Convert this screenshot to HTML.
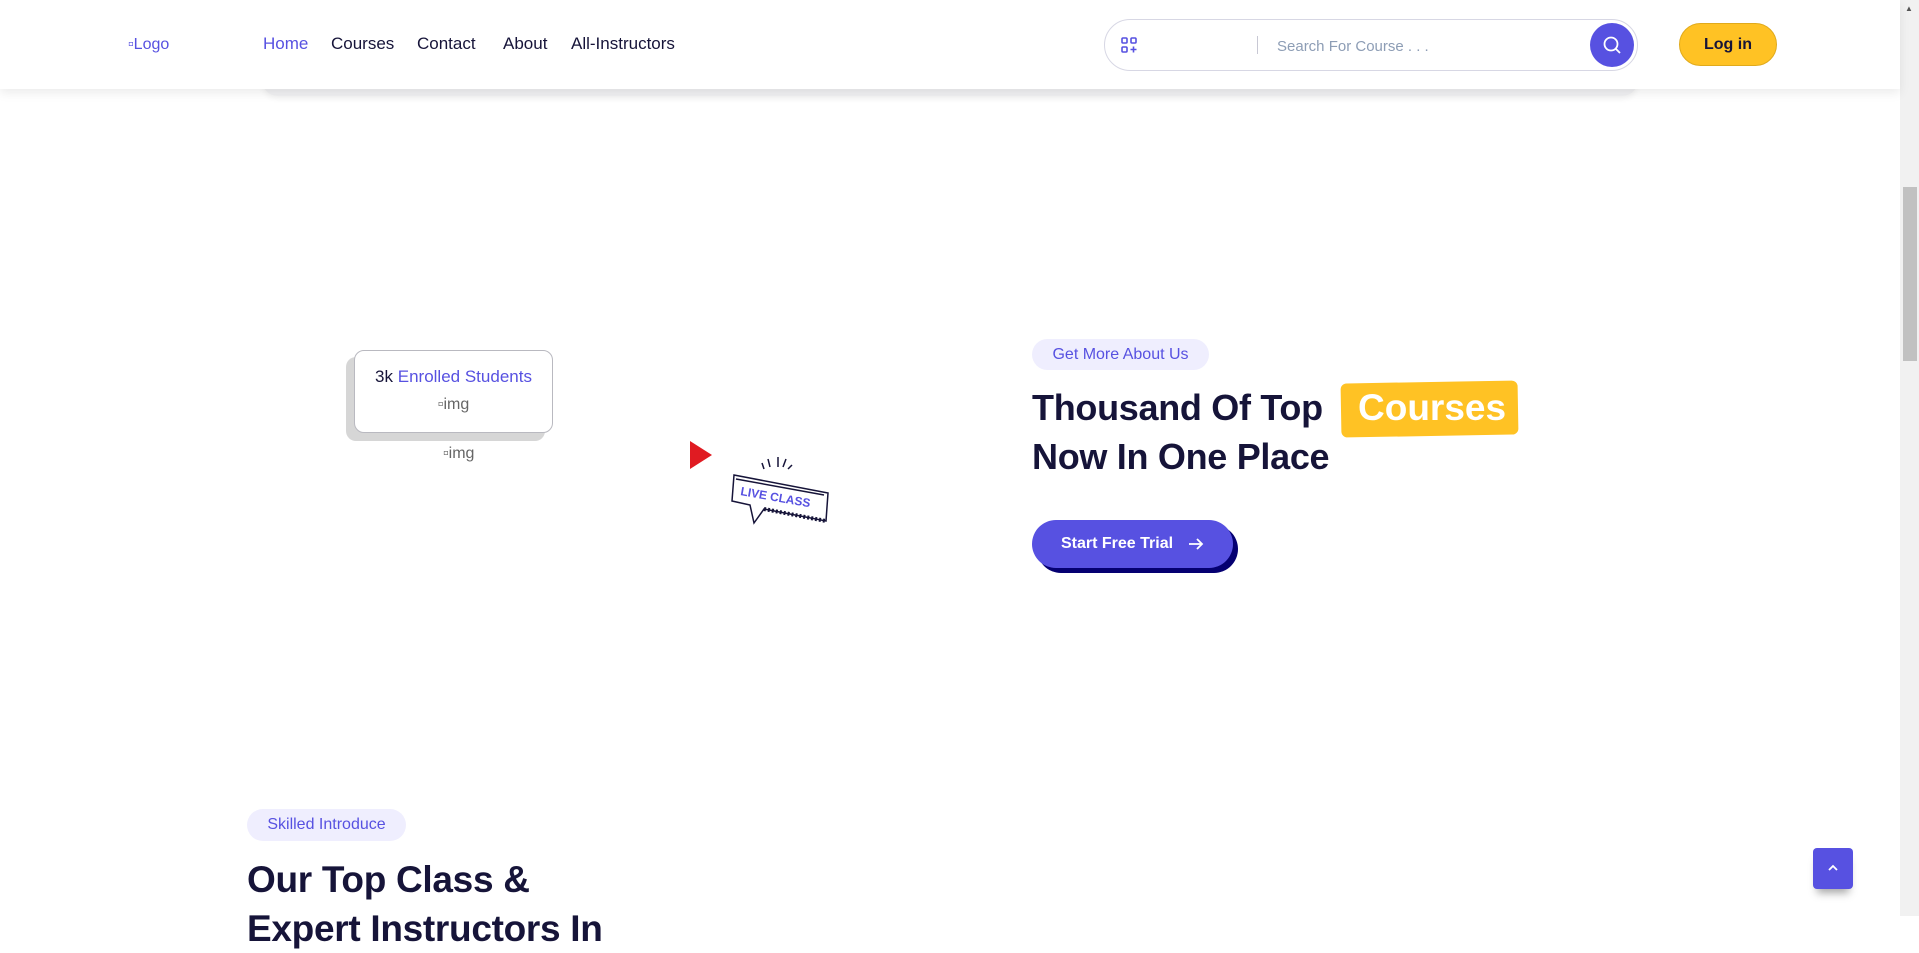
<!DOCTYPE html>
<html><head><meta charset="utf-8"><style>
*{margin:0;padding:0;box-sizing:border-box}
html,body{width:1919px;height:916px;overflow:hidden;background:#fff;font-family:"Liberation Sans",sans-serif;color:#161439}
.abs{position:absolute}
header{position:absolute;left:0;top:0;width:1900px;height:89px;background:#fff;box-shadow:0 4px 10px rgba(0,0,0,.08);z-index:2}
.band{position:absolute;left:262px;top:80px;width:1376px;height:16px;background:#f0f0f2;border-radius:0 0 20px 20px;box-shadow:0 3px 6px rgba(0,0,0,.05)}
.nav a{position:absolute;top:34px;font-size:17px;color:#161439;text-decoration:none}
.sb{position:absolute;right:0;top:0;width:19px;height:916px;background:#f1f1f1}
.thumb{position:absolute;right:2px;top:187px;width:14px;height:174px;background:#c1c1c1}
.badge{position:absolute;background:#efeefe;color:#5751e1;border-radius:16px;font-size:16px;text-align:center}
h1{position:absolute;font-size:36px;font-weight:bold;line-height:49px;color:#161439;letter-spacing:-0.3px}
</style></head><body>
<div class="band"></div>
<header>
 <div class="abs" style="left:128px;top:36px;font-size:16px;color:#5751e1">▫Logo</div>
 <div class="nav">
  <a style="left:263px;color:#5751e1">Home</a>
  <a style="left:331px">Courses</a>
  <a style="left:417px">Contact</a>
  <a style="left:503px">About</a>
  <a style="left:571px">All-Instructors</a>
 </div>
 <div class="abs" style="left:1104px;top:19px;width:534px;height:52px;border:1px solid #d7d7e4;border-radius:26px"></div>
 <svg class="abs" style="left:1121px;top:37px" width="16" height="16" viewBox="0 0 16 16" fill="none" stroke="#5751e1" stroke-width="1.6"><rect x="1" y="1" width="5" height="5" rx="1"/><rect x="10" y="1" width="5" height="5" rx="1"/><rect x="1" y="10" width="5" height="5" rx="1"/><path d="M12.5 9.5v6M9.5 12.5h6"/></svg>
 <div class="abs" style="left:1257px;top:36px;width:1px;height:18px;background:#c8c8d4"></div>
 <div class="abs" style="left:1277px;top:38px;font-size:15px;color:#8d9db5">Search For Course . . .</div>
 <div class="abs" style="left:1590px;top:23px;width:44px;height:44px;border-radius:50%;background:#5751e1"></div>
 <svg class="abs" style="left:1602px;top:35px" width="20" height="20" viewBox="0 0 20 20" fill="none" stroke="#fff" stroke-width="1.8"><circle cx="9" cy="9" r="6.5"/><path d="M14 14l4 4"/></svg>
 <div class="abs" style="left:1679px;top:23px;width:98px;height:43px;border-radius:22px;background:#ffc224;border:1px solid #e0aa1c;font-size:16px;font-weight:bold;text-align:center;line-height:41px;color:#161439">Log in</div>
</header>
<div class="sb"><div class="abs" style="left:5px;top:4px;font-size:8px;color:#555">▲</div><div class="thumb"></div></div>

<div class="abs" style="left:346px;top:357px;width:199px;height:84px;background:#d6d6d6;border-radius:10px"></div>
<div class="abs" style="left:354px;top:350px;width:199px;height:83px;background:#fff;border:1px solid #b9b9c0;border-radius:10px;text-align:center">
 <div style="margin-top:16px;font-size:17px"><span style="color:#161439">3k</span> <span style="color:#5751e1">Enrolled Students</span></div>
 <div style="margin-top:9px;font-size:16px;color:#666">▫img</div>
</div>
<div class="abs" style="left:443px;top:445px;font-size:16px;color:#666">▫img</div>
<svg class="abs" style="left:690px;top:441px" width="22" height="28"><path d="M0 0L22 14L0 28Z" fill="#e01b22"/></svg>
<svg class="abs" style="left:726px;top:455px" width="106" height="80" viewBox="0 0 106 80" fill="none" stroke="#161439" stroke-width="1.5">
 <path d="M42 4l2 8M52 2v10M60 4l-3 8M36 8l2 6M66 10l-4 4"/>
 <path d="M8 20l94 18-2 28-62-12-10 14-4-18-18-4z" fill="#fff"/>
 <path d="M10 24l88 16"/><path d="M38 54l62 12" stroke-width="4" stroke-dasharray="2 2"/>
 <text x="14" y="40" transform="rotate(10 14 40)" font-family="Liberation Sans" font-weight="bold" font-size="12" fill="#5751e1" stroke="none">LIVE CLASS</text>
</svg>

<div class="badge" style="left:1032px;top:339px;width:177px;height:31px;line-height:31px">Get More About Us</div>
<h1 style="left:1032px;top:383px">Thousand Of Top</h1>
<div class="abs" style="left:1341px;top:382px;width:177px;height:54px;background:#ffc224;border-radius:6px;transform:rotate(-1deg)"></div>
<div class="abs" style="left:1358px;top:387px;font-size:37px;font-weight:bold;color:#fff">Courses</div>
<h1 style="left:1032px;top:432px">Now In One Place</h1>
<div class="abs" style="left:1037px;top:525px;width:201px;height:48px;border-radius:24px;background:#050071"></div>
<div class="abs" style="left:1032px;top:520px;width:201px;height:48px;border-radius:24px;background:#5751e1;color:#fff;font-size:16px;font-weight:bold;line-height:48px;padding-left:29px">Start Free Trial</div>
<svg class="abs" style="left:1188px;top:536px" width="16" height="16" viewBox="0 0 16 16" fill="none" stroke="#fff" stroke-width="1.8"><path d="M1 8h13M9 3l5 5-5 5"/></svg>

<div class="badge" style="left:247px;top:809px;width:159px;height:32px;line-height:32px">Skilled Introduce</div>
<h1 style="left:247px;top:855px;font-size:37px">Our Top Class &amp;<br>Expert Instructors In</h1>
<div class="abs" style="left:1813px;top:848px;width:40px;height:41px;background:#5751e1;border-radius:4px;box-shadow:0 8px 8px -4px rgba(0,0,0,.35)"></div>
<svg class="abs" style="left:1827px;top:862px" width="12" height="12" viewBox="0 0 12 12" fill="none" stroke="#fff" stroke-width="1.8"><path d="M2 8l4-4 4 4"/></svg>
</body></html>
